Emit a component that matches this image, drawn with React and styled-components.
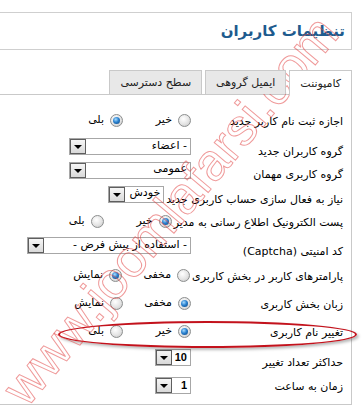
import React from 'react';
import styled, { createGlobalStyle, css } from 'styled-components';

const GlobalStyle = createGlobalStyle`
  html, body {
    margin: 0;
    padding: 0;
    background: #fff;
  }
  body {
    font-family: "DejaVu Sans", Tahoma, sans-serif;
    font-size: 11px;
    color: #000;
  }
`;

const Page = styled.div`
  position: relative;
  direction: rtl;
  width: 363px;
  height: 409px;
  overflow: hidden;
  box-sizing: border-box;
  padding: 12px 11px 0 0;
`;

const TitleBox = styled.div`
  height: 38px;
  margin-left: -20px;
  border: 1px solid #cfcfcf;
  box-sizing: border-box;
  display: flex;
  align-items: center;
  padding-right: 6px;
`;

const Title = styled.h1`
  margin: 0;
  font-size: 15px;
  font-weight: bold;
  color: #1e5b8e;
`;

const TabBar = styled.div`
  display: flex;
  gap: 3px;
  margin-top: 20px;
  height: 24px;
  position: relative;
  z-index: 1;
`;

const Tab = styled.div`
  height: 24px;
  box-sizing: border-box;
  padding: 0 10px;
  display: flex;
  align-items: center;
  border: 1px solid #c9c9c9;
  border-bottom: none;
  background: #e8e8e8;
  color: #222;
  ${(p) =>
    p.$active &&
    css`
      background: #fff;
      height: 25px;
    `}
`;

const Panel = styled.div`
  margin-left: -20px;
  border: 1px solid #c9c9c9;
  height: 311px;
  box-sizing: border-box;
  padding: 15px 8px 0 0;
`;

const Row = styled.div`
  display: flex;
  align-items: flex-start;
  height: ${(p) => p.$h}px;
`;

const Label = styled.label`
  min-width: 150px;
  margin-left: 2px;
  margin-top: ${(p) => p.$top}px;
  line-height: 14px;
  white-space: nowrap;
`;

const Options = styled.div`
  display: flex;
  margin-top: ${(p) => p.$top || 0}px;
  height: 14px;
  align-items: center;
`;

const Option = styled.span`
  display: inline-flex;
  align-items: center;
  gap: 6px;
  width: 68px;
  line-height: 14px;
  white-space: nowrap;
`;

const Radio = styled.span`
  position: relative;
  width: 13px;
  height: 13px;
  border-radius: 50%;
  box-sizing: border-box;
  border: 1px solid #8c8e8e;
  background: radial-gradient(circle at 40% 35%, #ffffff 0%, #e4e4e4 55%, #c2c2c2 100%);
  flex-shrink: 0;
  ${(p) =>
    p.$checked &&
    css`
      &::after {
        content: '';
        position: absolute;
        left: 2px;
        top: 2px;
        width: 7px;
        height: 7px;
        border-radius: 50%;
        background: radial-gradient(circle at 40% 35%, #a8dcff 0%, #2a82d0 45%, #0b3f78 100%);
      }
    `}
`;

const Select = styled.div`
  display: flex;
  width: ${(p) => p.$w}px;
  height: 17px;
  box-sizing: border-box;
  border: 1px solid #a7a7a7;
  background: #fff;
`;

const Value = styled.span`
  flex: 1;
  padding-right: 3px;
  line-height: ${(p) => (p.$high ? 11 : 14)}px;
  white-space: nowrap;
  overflow: hidden;
  font-weight: ${(p) => (p.$num ? 'bold' : 'normal')};
  font-family: ${(p) => (p.$num ? '"Liberation Sans", sans-serif' : 'inherit')};
`;

const Arrow = styled.span`
  width: 16px;
  box-sizing: border-box;
  border: 1px solid #5e5e5e;
  background: linear-gradient(#f6f6f6, #d9d9d9);
  display: flex;
  align-items: center;
  justify-content: center;
  &::before {
    content: '';
    border-left: 4px solid transparent;
    border-right: 4px solid transparent;
    border-top: 4px solid #000;
    margin-top: 1px;
  }
`;

const Highlight = styled.div`
  position: absolute;
  left: 58px;
  top: 321px;
  width: 299px;
  height: 27px;
  box-sizing: border-box;
  border: 2px solid #c3121c;
  border-radius: 50%;
  box-shadow: 2px 2px 3px rgba(0, 0, 0, 0.28);
  pointer-events: none;
`;

const Watermark = styled.div`
  position: absolute;
  left: 170px;
  top: 210px;
  transform: translate(-50%, -50%) rotate(-50deg);
  direction: ltr;
  font-family: "Liberation Sans", Arial, sans-serif;
  font-size: 52px;
  white-space: nowrap;
  color: transparent;
  -webkit-text-stroke: 1px rgba(225, 70, 70, 0.55);
  pointer-events: none;
`;

const Choice = ({ items, checked, top }) => (
  <Options $top={top}>
    {items.map((t) => (
      <Option key={t}>
        <Radio $checked={t === checked} />
        {t}
      </Option>
    ))}
  </Options>
);

const Drop = ({ w, value, num, high }) => (
  <Select $w={w}>
    <Value $num={num} $high={high}>{value}</Value>
    <Arrow />
  </Select>
);

export default function App() {
  return (
    <>
      <GlobalStyle />
      <Page>
        <TitleBox>
          <Title>تنظیمات کاربران</Title>
        </TitleBox>

        <TabBar>
          <Tab $active>کامپوننت</Tab>
          <Tab>ایمیل گروهی</Tab>
          <Tab>سطح دسترسی</Tab>
        </TabBar>

        <Panel>
          <Row $h={28}>
            <Label $top={5}>اجازه ثبت نام کاربر جدید</Label>
            <Choice items={['خیر', 'بلی']} checked="بلی" top={3} />
          </Row>
          <Row $h={24}>
            <Label $top={7}>گروه کاربران جدید</Label>
            <Drop w={122} value="- اعضاء" />
          </Row>
          <Row $h={24}>
            <Label $top={6}>گروه کاربری مهمان</Label>
            <Drop w={122} value="عمومی" high />
          </Row>
          <Row $h={27}>
            <Label $top={7}>نیاز به فعال سازی حساب کاربری جدید</Label>
            <Drop w={56} value="خودش" high />
          </Row>
          <Row $h={24}>
            <Label $top={3}>پست الکترونیک اطلاع رسانی به مدیر</Label>
            <Choice items={['خیر', 'بلی']} checked="خیر" top={1} />
          </Row>
          <Row $h={31}>
            <Label $top={8}>کد امنیتی (Captcha)</Label>
            <Drop w={164} value="- استفاده از پیش فرض -" />
          </Row>
          <Row $h={28}>
            <Label $top={2}>پارامترهای کاربر در بخش کاربری</Label>
            <Choice items={['مخفی', 'نمایش']} checked="نمایش" />
          </Row>
          <Row $h={28}>
            <Label $top={2}>زبان بخش کاربری</Label>
            <Choice items={['مخفی', 'نمایش']} checked="مخفی" />
          </Row>
          <Row $h={25}>
            <Label $top={2}>تغییر نام کاربری</Label>
            <Choice items={['خیر', 'بلی']} checked="خیر" />
          </Row>
          <Row $h={28}>
            <Label $top={7}>حداکثر تعداد تغییر</Label>
            <Drop w={36} value="10" num />
          </Row>
          <Row $h={27}>
            <Label $top={3}>زمان به ساعت</Label>
            <Drop w={36} value="1" num />
          </Row>
        </Panel>

        <Highlight />
        <Watermark>www.joomlafarsi.com</Watermark>
      </Page>
    </>
  );
}
